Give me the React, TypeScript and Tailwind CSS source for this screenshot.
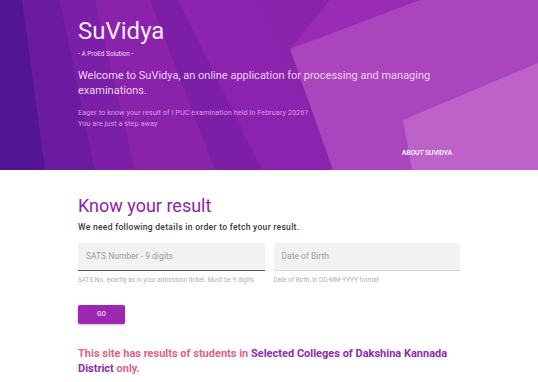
import React from 'react';

function HeroBackground() {
  return (
    <svg
      className="absolute inset-0 h-full w-full"
      viewBox="0 0 538 170"
      preserveAspectRatio="none"
      aria-hidden="true"
    >
      <rect width="538" height="170" fill="#8a22ac" />
      {/* left dark bands */}
      <polygon points="0,0 60,0 95,170 0,170" fill="#6a1b9e" />
      <polygon points="0,0 22,0 45,170 0,170" fill="#521593" />
      <polygon points="60,0 95,0 135,170 95,170" fill="#7a1fa6" />
      {/* middle shadow band */}
      <polygon points="150,0 178,0 262,170 215,170" fill="#7c1ea6" />
      <polygon points="178,0 260,0 335,170 262,170" fill="#8c23ae" />
      {/* right upper tone */}
      <polygon points="330,0 538,0 538,30 290,49" fill="#9a2bb4" />
      {/* large light panel */}
      <polygon points="290,49 420,0 538,0 538,170 333,170" fill="#ab45bd" />
      {/* lower-right light panel */}
      <polygon points="403,120 538,63 538,170 412,170" fill="#bc62c8" />
    </svg>
  );
}

export default function App() {
  return (
    <div className="min-h-[382px] w-full bg-white font-['Roboto',sans-serif]">
      {/* Hero */}
      <header className="relative h-[170px] overflow-hidden">
        <HeroBackground />
        <div className="relative mx-auto flex h-full w-[382px] flex-col pt-[17px]">
          <h1 className="text-[24px] leading-[28px] text-[#f6eafa]">SuVidya</h1>
          <p className="mt-[5px] text-[6.5px] leading-[8px] text-[#f1dcf5]">- A ProEd Solution -</p>
          <p className="mt-[10px] text-[11px] leading-[15px] text-[#ecd3f3]">
            Welcome to SuVidya, an online application for processing and managing examinations.
          </p>
          <p className="mt-[9px] text-[7.4px] leading-[11px] text-[#d59be3]">
            Eager to know your result of I PUC examination held in February 2026?
            <br />
            You are just a step away
          </p>
          <div className="mt-auto mb-[12px] flex justify-end pr-[8px]">
            <span className="text-[7px] font-medium tracking-tight text-white">ABOUT SUVIDYA</span>
          </div>
        </div>
      </header>

      {/* Result form */}
      <main className="mx-auto w-[382px] pt-[24px]">
        <h2 className="text-[18px] leading-[23px] text-[#8e24aa]">Know your result</h2>
        <p className="mt-[4px] text-[8.5px] font-medium tracking-[0.3px] text-[#3a3a3a]">
          We need following details in order to fetch your result.
        </p>

        <div className="mt-[9px] grid grid-cols-2 gap-[9px]">
          <div>
            <div className="flex h-[28px] items-center border-b-[1.5px] border-[#555] bg-[#f2f2f2] px-[8px] text-[8.5px] text-[#9a9a9a]">
              SATS Number - 9 digits
            </div>
            <p className="mt-[5px] whitespace-nowrap text-[6.45px] text-[#b0b0b0]">
              SATS No. exactly as in your admission ticket. Must be 9 digits
            </p>
          </div>
          <div>
            <div className="flex h-[28px] items-center border-b border-[#d6d6d6] bg-[#f2f2f2] px-[8px] text-[8.5px] text-[#9a9a9a]">
              Date of Birth
            </div>
            <p className="mt-[5px] whitespace-nowrap text-[6.45px] text-[#b0b0b0]">
              Date of Birth, in DD-MM-YYYY format
            </p>
          </div>
        </div>

        <button className="mt-[20px] flex h-[19px] w-[47px] items-center justify-center rounded-[2px] bg-[#9c27b0] text-[6.5px] font-medium text-[#f5e1f8] shadow-[0_1px_3px_rgba(0,0,0,0.25)]">
          GO
        </button>

        <p className="mt-[22px] text-[11px] font-bold leading-[15px] text-[#e0608a]">
          This site has results of students in{' '}
          <span className="text-[#8e2bb0]">Selected Colleges of Dakshina Kannada District</span> only.
        </p>
      </main>
    </div>
  );
}
